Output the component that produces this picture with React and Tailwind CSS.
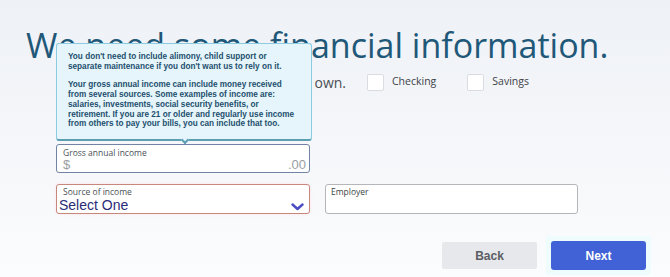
export default function App() {
  return (
    <div className="relative w-[670px] h-[277px] overflow-hidden bg-gradient-to-b from-[#eef1f6] to-[#fbfcfd] font-['Open_Sans',sans-serif]">
      <h1 className="pl-[26px] pt-[28px] text-[34px] leading-[34px] font-normal text-[#1f5878] whitespace-nowrap">
        We need some financial information.
      </h1>
      <div className="flex items-center pl-[56px] mt-[11px] h-[18px]">
        <div className="w-[290px] text-right text-[14px] text-[#4a4f55] whitespace-nowrap overflow-hidden flex justify-end">
          Please select the accounts you own.
        </div>
        <div className="ml-[21px] w-[17px] h-[17px] bg-white border border-[#d9dce1] rounded-[2px]" />
        <span className="ml-[8px] text-[10.5px] text-[#3d4247]">Checking</span>
        <div className="ml-[31px] w-[17px] h-[17px] bg-white border border-[#d9dce1] rounded-[2px]" />
        <span className="ml-[8px] text-[10.5px] text-[#3d4247]">Savings</span>
      </div>

      <div className="ml-[56px] mt-[53px] w-[254px] h-[29px] bg-white border border-[#7283a6] rounded-[3px] px-[6px] pt-[2px] flex flex-col">
        <span className="text-[8.5px] leading-[11px] text-[#4b5157]">Gross annual income</span>
        <div className="flex justify-between items-center leading-[14px] text-[13px] text-[#9a9ea3] font-['Liberation_Sans',sans-serif]">
          <span>$</span>
          <span className="-mr-[3px]">.00</span>
        </div>
      </div>

      <div className="flex mt-[11px] ml-[56px] gap-[15px]">
        <div className="relative w-[254px] h-[30px] bg-white border border-[#c8877c] rounded-[3px] pl-[6px] pt-[1px] shadow-[0_0_3px_#fbe3e6]">
          <div className="text-[8.5px] leading-[11px] text-[#4b5157]">Source of income</div>
          <div className="-ml-[4px] text-[14px] leading-[16px] text-[#2a2c78] font-['Liberation_Sans',sans-serif]">Select One</div>
          <svg className="absolute right-[5px] top-[18px]" width="13" height="8" viewBox="0 0 13 8">
            <path d="M1.5 1.5 L6.5 6 L11.5 1.5" fill="none" stroke="#4c4cc4" strokeWidth="2.4" strokeLinecap="round" strokeLinejoin="round" />
          </svg>
        </div>
        <div className="w-[253px] h-[30px] bg-white border border-[#b4b6b9] rounded-[3px] pl-[5px] pt-[1px]">
          <div className="text-[8.5px] leading-[11px] text-[#3b3f44]">Employer</div>
        </div>
      </div>

      <div className="flex justify-end mt-[27px] pr-[24px] gap-[14px] items-center font-['Liberation_Sans',sans-serif]">
        <div className="w-[95px] h-[27px] bg-[#e7e8eb] rounded-[2px] flex items-center justify-center text-[12px] font-bold text-[#5a5d62]">Back</div>
        <div className="p-[5px] -m-[5px] bg-[#eefcfe] rounded-[3px]">
          <div className="w-[95px] h-[29px] bg-[#4062d6] rounded-[3px] flex items-center justify-center text-[12px] font-bold text-white">Next</div>
        </div>
      </div>

      <div className="absolute left-[56px] top-[43px] w-[256px] h-[98px] bg-[#e5f5fb] border border-[#8ccbe0] border-b-2 border-b-[#5c9fb2] rounded-[3px] pl-[11px] pt-[8px] font-['Liberation_Sans',sans-serif] font-bold text-[8.2px] leading-[9.7px] text-[#1e4f6d] whitespace-nowrap">
        <p>You don't need to include alimony, child support or<br />separate maintenance if you don't want us to rely on it.</p>
        <p className="mt-[9px]">Your gross annual income can include money received<br />from several sources. Some examples of income are:<br />salaries, investments, social security benefits, or<br />retirement. If you are 21 or older and regularly use income<br />from others to pay your bills, you can include that too.</p>
        <div className="absolute left-[125px] -bottom-[4px] w-[6px] h-[6px] rotate-45 bg-[#e5f5fb] border-r-2 border-b-2 border-[#5c9fb2]" />
      </div>
    </div>
  );
}
